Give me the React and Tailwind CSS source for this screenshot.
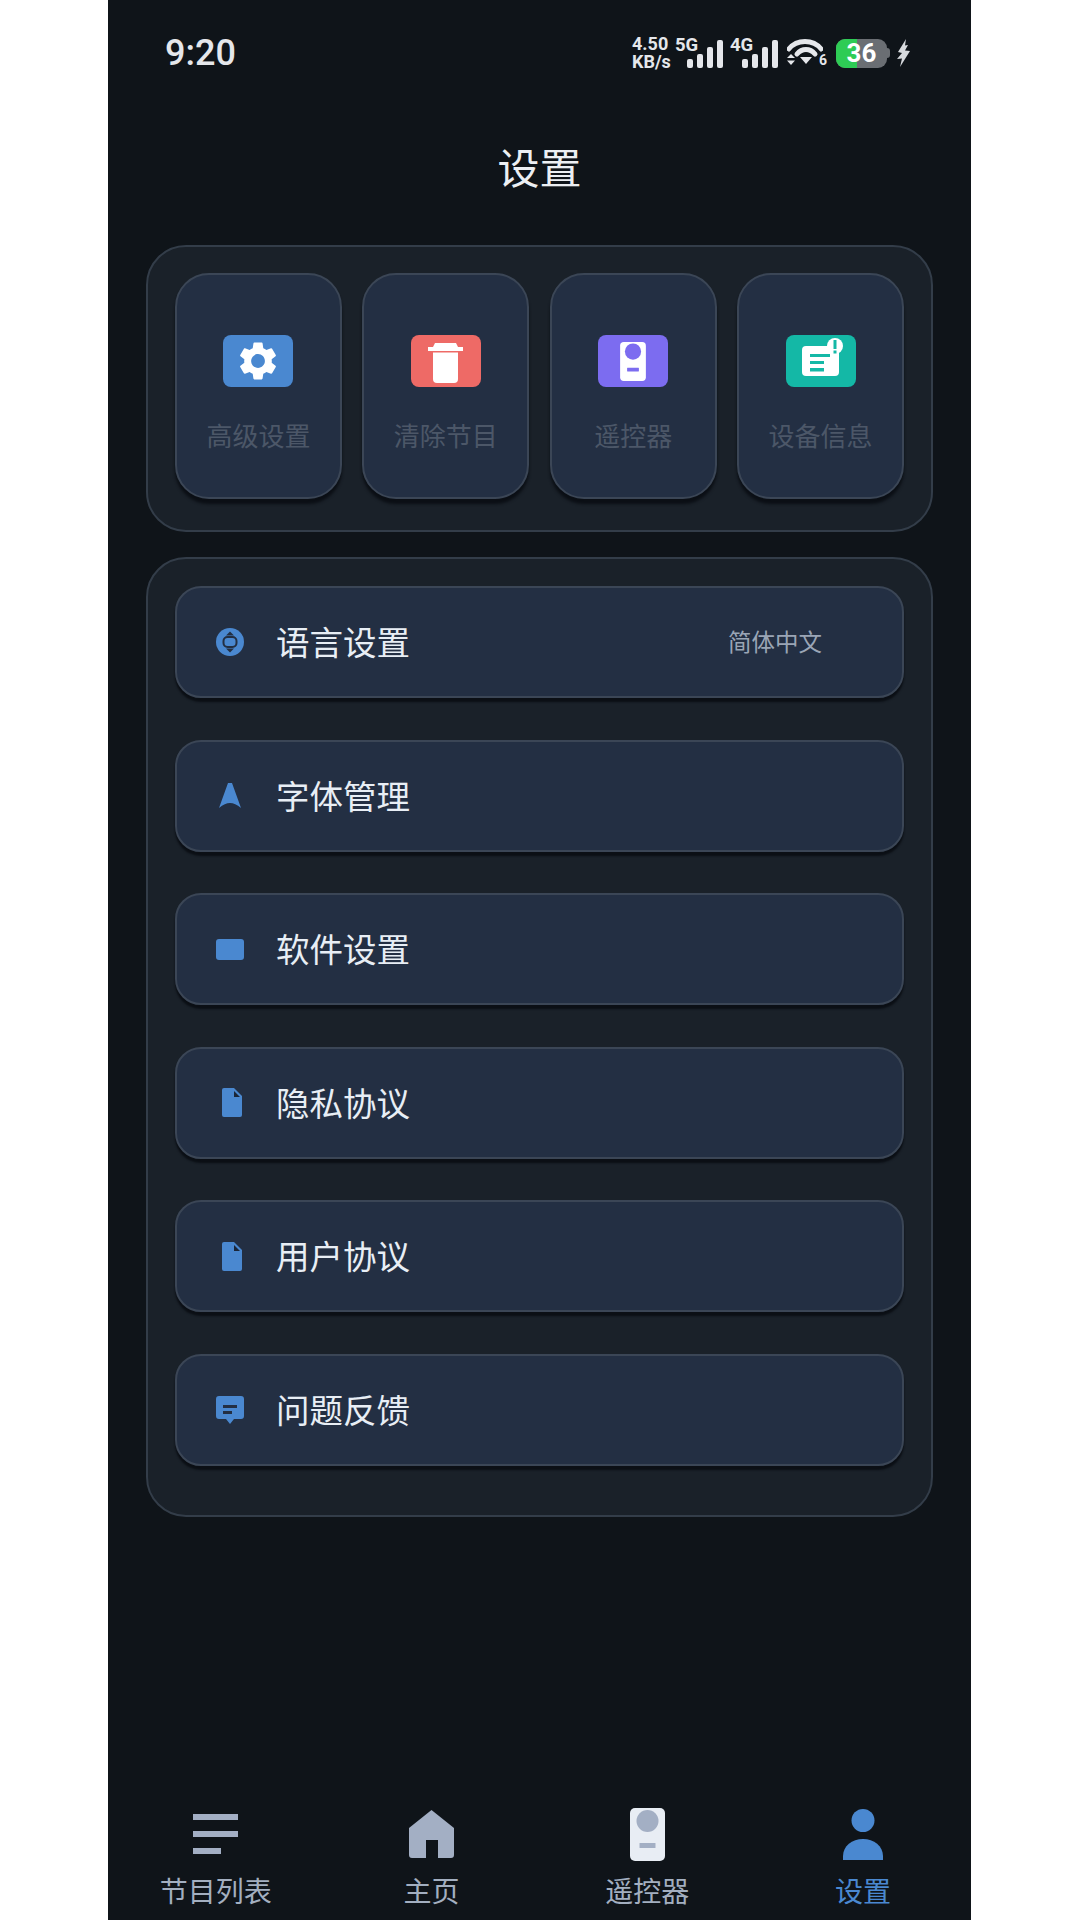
import React from 'react';
import { MdSettings } from 'react-icons/md';

const cjk = "font-['Noto_Sans_CJK_SC','Noto_Sans',sans-serif]";

const TrashIcon = () => (
  <svg className="mt-[4px]" width="35" height="40" viewBox="0 0 35 40" fill="white">
    <path d="M7 0 H28 L30 4 H35 V8 H0 V4 H5 Z" />
    <path d="M5 9.5 H30 V36 Q30 40 26 40 H9 Q5 40 5 36 Z" />
  </svg>
);

const RemoteIcon = ({ body, dot, width, height }) => (
  <svg width={width} height={height} viewBox="0 0 35 53">
    <rect width="35" height="53" rx="5" fill={body} />
    <circle cx="17.5" cy="13" r="11" fill={dot} />
    <rect x="9.5" y="35" width="16" height="5" rx="0.5" fill={dot} />
  </svg>
);

const InfoIcon = () => (
  <svg width="70" height="52" viewBox="0 0 70 52">
    <rect x="16" y="11" width="37" height="30" rx="4" fill="white" />
    <rect x="24" y="19" width="20" height="3" fill="#14b8a6" />
    <rect x="24" y="26" width="14" height="3" fill="#14b8a6" />
    <rect x="24" y="33" width="14" height="3.5" fill="#14b8a6" />
    <circle cx="49" cy="11" r="8" fill="white" />
    <rect x="47.5" y="5" width="3" height="9" fill="#14b8a6" />
    <rect x="47.5" y="15.5" width="3" height="3" fill="#14b8a6" />
  </svg>
);

const tiles = [
  { label: '高级设置', color: 'bg-[#4a88d0]', icon: <MdSettings size={46} color="white" /> },
  { label: '清除节目', color: 'bg-[#ee6a66]', icon: <TrashIcon /> },
  { label: '遥控器', color: 'bg-[#7c6cf0]', icon: <RemoteIcon body="white" dot="#7c6cf0" width="26" height="39" /> },
  { label: '设备信息', color: 'bg-[#14b8a6]', icon: <InfoIcon /> },
];

const GlobeIcon = () => (
  <svg width="28" height="28" viewBox="0 0 28 28">
    <circle cx="14" cy="14" r="14" fill="#4a88d0" />
    <rect x="7.5" y="9" width="13" height="10" rx="4" fill="none" stroke="#232f43" strokeWidth="2" />
    <path d="M14 3.5 L18 7.5 H10 Z M14 24.5 L18 20.5 H10 Z" fill="#232f43" />
  </svg>
);

const FontIcon = () => (
  <svg width="22" height="26" viewBox="0 0 22 26">
    <path d="M9 0 H13 L22 25 Q16 20 11 20 Q6 20 0 25 Z" fill="#4a88d0" />
  </svg>
);

const SoftwareIcon = () => (
  <svg width="28" height="21" viewBox="0 0 28 21">
    <rect width="28" height="21" rx="3" fill="#4a88d0" />
  </svg>
);

const FileIcon = () => (
  <svg className="ml-[3px]" width="20" height="29" viewBox="0 0 20 29">
    <path d="M2 0 H12 L20 8 V27 Q20 29 18 29 H2 Q0 29 0 27 V2 Q0 0 2 0 Z" fill="#4a88d0" />
    <path d="M12 3 L18 9 H12 Z" fill="#1b2638" />
  </svg>
);

const ChatIcon = () => (
  <svg width="28" height="28" viewBox="0 0 28 28">
    <path d="M3 0 H25 Q28 0 28 3 V20 Q28 23 25 23 H18 L14 28 L10 23 H3 Q0 23 0 20 V3 Q0 0 3 0 Z" fill="#4a88d0" />
    <rect x="7" y="9" width="14" height="3" fill="#232f43" />
    <rect x="7" y="15" width="9" height="3" fill="#232f43" />
  </svg>
);

const rows = [
  { label: '语言设置', icon: <GlobeIcon />, value: '简体中文' },
  { label: '字体管理', icon: <FontIcon /> },
  { label: '软件设置', icon: <SoftwareIcon /> },
  { label: '隐私协议', icon: <FileIcon /> },
  { label: '用户协议', icon: <FileIcon /> },
  { label: '问题反馈', icon: <ChatIcon /> },
];

const ListIcon = () => (
  <svg width="46" height="40" viewBox="0 0 46 40" fill="#a3afc4">
    <rect width="45" height="6" />
    <rect y="17" width="45" height="6" />
    <rect y="34" width="28" height="6" />
  </svg>
);

const HomeIcon = () => (
  <svg width="46" height="48" viewBox="0 0 46 48">
    <path d="M22.5 0 L45 18 V45 Q45 48 42 48 H29 V30 H17 V48 H3 Q0 48 0 45 V18 Z" fill="#a3afc4" />
  </svg>
);

const PersonIcon = () => (
  <svg width="40" height="51" viewBox="0 0 40 51" fill="#4a88d0">
    <circle cx="20" cy="11.5" r="11.5" />
    <path d="M0 51 V47 C0 37 9 30 20 30 C31 30 40 37 40 47 V51 Z" />
  </svg>
);

const navItems = [
  { label: '节目列表', icon: <ListIcon /> },
  { label: '主页', icon: <HomeIcon /> },
  { label: '遥控器', icon: <RemoteIcon body="#e8edf4" dot="#a3afc4" width="35" height="53" /> },
  { label: '设置', icon: <PersonIcon />, active: true },
];

const Signal = ({ net }) => (
  <div className="relative h-[30px] w-[48px]">
    <span className="absolute left-0 top-[-2px] text-[18.5px] font-bold leading-[18px]">{net}</span>
    <svg className="absolute bottom-0 right-0" width="36" height="28" viewBox="0 0 36 28" fill="#e5e7eb">
      <rect y="19" width="6" height="9" rx="2" />
      <rect x="10" y="14" width="6" height="14" rx="2" />
      <rect x="20" y="7" width="6" height="21" rx="2" />
      <rect x="30" y="0" width="6" height="28" rx="2" />
    </svg>
  </div>
);

const StatusBar = () => (
  <div className="flex h-[52px] items-center justify-between pl-[57px] pr-[61px] font-['Roboto',sans-serif] text-[#e5e7eb]">
    <span className="text-[36px] font-medium leading-none">9:20</span>
    <div className="flex items-center">
      <div className="w-[43px] whitespace-nowrap text-[18px] font-bold leading-[18px]">
        <div>4.50</div>
        <div>KB/s</div>
      </div>
      <Signal net="5G" />
      <div className="ml-[7px]">
        <Signal net="4G" />
      </div>
      <div className="relative ml-[9px] h-[28px] w-[40px]">
        <svg width="36" height="26" viewBox="0 0 36 26" fill="none">
          <path d="M2 10 C11 0 29 0 38 10" stroke="#e5e7eb" strokeWidth="5" strokeLinecap="round" transform="scale(0.9 1)" />
          <path d="M10 15 C15 9 23 9 28 15" stroke="#e5e7eb" strokeWidth="5" strokeLinecap="round" />
          <path d="M13 18 H25 L19 25 Z" fill="#e5e7eb" />
          <path d="M4 15 L8 19 H0 Z M4 26 L8 21.5 H0 Z" fill="#e5e7eb" />
        </svg>
        <span className="absolute bottom-0 right-0 text-[14px] font-bold leading-[14px]">6</span>
      </div>
      <div className="relative ml-[9px] flex h-[29px] w-[51px] items-center justify-center overflow-hidden rounded-[9px] bg-[#6a6e73]">
        <div className="absolute left-0 top-0 h-full w-[21px] bg-[#2ecc55]" />
        <span className="relative text-[26px] font-bold leading-none text-white">36</span>
      </div>
      <div className="h-[10px] w-[3px] rounded-r-sm bg-[#6a6e73]" />
      <svg className="ml-[7px]" width="13" height="28" viewBox="0 0 13 28" fill="#d7dade">
        <path d="M9 0 L1 13 L5 14 L0 20 L5 19.5 L3 28 L13 12 L8 11.5 L11 6 L8 6.5 Z" />
      </svg>
    </div>
  </div>
);

export default function App() {
  return (
    <div className={`flex h-[1920px] w-[1080px] bg-white pl-[108px] ${cjk}`}>
      <div className="flex w-[863px] flex-col bg-[#0f1419]">
        <div className="pt-[27px]">
          <StatusBar />
        </div>

        <h1 className="mt-[57px] text-center text-[42px] font-normal leading-[60px] text-[#eceff3]">设置</h1>

        <div className="mx-[38px] mt-[49px] grid grid-cols-4 gap-[20.5px] rounded-[40px] border-2 border-[#333d49] bg-[#1a2129] px-[27px] pb-[31px] pt-[26px]">
          {tiles.map((tile) => (
            <div
              key={tile.label}
              className="flex h-[226px] flex-col items-center rounded-[34px] border-2 border-[#3b4656] bg-[#232f43] pt-[60px] shadow-[0_5px_3px_#0b0f15]"
            >
              <div className={`flex h-[52px] w-[70px] items-center justify-center rounded-lg ${tile.color}`}>
                {tile.icon}
              </div>
              <span className="mt-[29px] text-[26px] leading-[38px] text-[#4c5768]">{tile.label}</span>
            </div>
          ))}
        </div>

        <div className="mx-[38px] mt-[25px] flex flex-col gap-[41.5px] rounded-[40px] border-2 border-[#333d49] bg-[#1a2129] px-[27px] pb-[49px] pt-[27px]">
          {rows.map((row) => (
            <div
              key={row.label}
              className="flex h-[112px] items-center rounded-[26px] border-2 border-[#3b4656] bg-[#232f43] pl-[39px] shadow-[0_4px_2px_#0b0f15]"
            >
              <div className="flex w-[28px] items-center justify-center">{row.icon}</div>
              <span className="-mt-[2px] ml-[32px] text-[33.5px] leading-[48px] text-[#e8eef5]">{row.label}</span>
              {row.value && (
                <span className="-mt-[2px] ml-auto mr-[80px] text-[23.5px] leading-[34px] text-[#9aa5b5]">{row.value}</span>
              )}
            </div>
          ))}
        </div>

        <div className="mt-auto grid grid-cols-4 pb-[10px]">
          {navItems.map((item) => (
            <div key={item.label} className="flex flex-col items-center">
              <div className="flex h-[56px] items-center justify-center">{item.icon}</div>
              <span className={`mt-[8px] text-[28px] leading-[40px] ${item.active ? 'text-[#4a88d0]' : 'text-[#a3afc0]'}`}>
                {item.label}
              </span>
            </div>
          ))}
        </div>
      </div>
    </div>
  );
}
